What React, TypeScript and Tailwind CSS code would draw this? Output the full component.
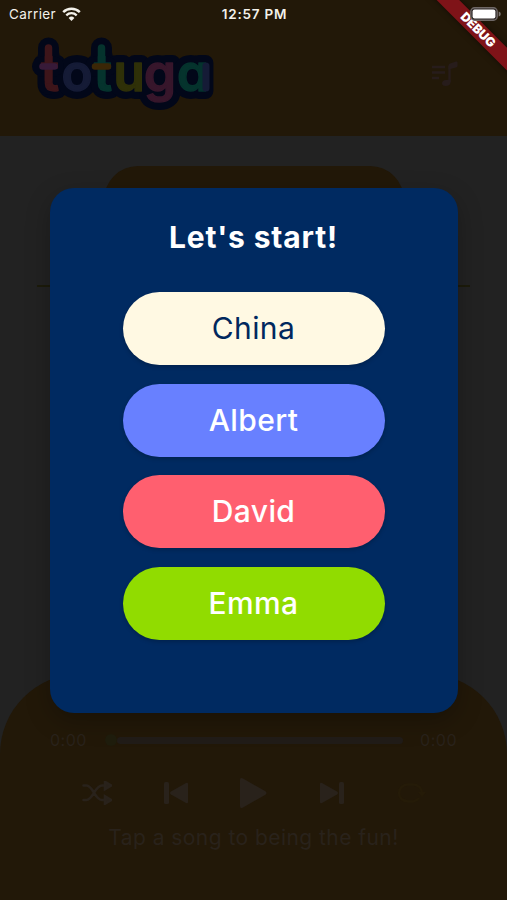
import React from 'react';

interface Player {
  name: string;
  className: string;
}

const players: Player[] = [
  { name: 'China', className: 'bg-[#fff9e3] text-[#00285e] font-normal' },
  { name: 'Albert', className: 'bg-[#6880ff] text-white font-medium' },
  { name: 'David', className: 'bg-[#ff5f6f] text-white font-medium' },
  { name: 'Emma', className: 'bg-[#91dc00] text-white font-medium' },
];

// each letter of the wordmark has its own colour and position
const letters = [
  { char: 't', x: 41, fill: '#3d151a' },
  { char: 'o', x: 61.5, fill: '#151b36' },
  { char: 't', x: 94, fill: '#05332d' },
  { char: 'u', x: 113.5, fill: '#2f3008' },
  { char: 'g', x: 144, fill: '#37162b' },
  { char: 'a', x: 177, fill: '#05332d' },
];

function StatusBar() {
  return (
    <div className="grid h-7 grid-cols-3 items-center pl-[9px] pr-[5px] text-[13.5px] text-[#f3f1ea]">
      <div className="flex items-center gap-[6px] tracking-[0.4px]">
        Carrier
        <svg width="19" height="14" viewBox="0 0 19 14" fill="none" stroke="currentColor">
          <path d="M1.2 5.1a12 12 0 0 1 16.6 0" strokeWidth="2.5" />
          <path d="M4.3 8.3a7.5 7.5 0 0 1 10.4 0" strokeWidth="2.3" />
          <path d="M9.5 14 6.6 11a4.2 4.2 0 0 1 5.8 0Z" fill="currentColor" stroke="none" />
        </svg>
      </div>
      <div className="whitespace-nowrap pr-[2px] text-center font-semibold tracking-[0.8px]">12:57 PM</div>
      <div className="relative z-20 flex justify-end">
        <svg width="32" height="14" viewBox="0 0 32 14">
          <rect x="0.8" y="0.8" width="26.4" height="12.4" rx="3.8" fill="#2b2525" stroke="#6f6866" strokeWidth="1.4" />
          <rect x="2.6" y="2.6" width="22.8" height="8.8" rx="2" fill="#fff" />
          <path d="M28.7 4.6c1.6.5 2 1.4 2 2.4s-.4 1.9-2 2.4Z" fill="#7d7775" />
        </svg>
      </div>
    </div>
  );
}

function Logo() {
  return (
    <svg
      width="190"
      height="80"
      viewBox="30 34 190 80"
      className="font-['Inter',sans-serif] text-[51px] font-semibold [font-feature-settings:'cv11','ss03']"
      strokeLinejoin="round"
      strokeLinecap="round"
    >
      {letters.map((l, i) => (
        <text key={i} x={l.x} y="91" fill="#020719" stroke="#020719" strokeWidth="16">
          {l.char}
        </text>
      ))}
      <path d="M48.5 48v36M101.500 48v36" stroke="#020719" strokeWidth="21" />
      <path d="M42 66.500h12M95 66.500h12" stroke="#020719" strokeWidth="20" />
      {letters.map((l, i) => (
        <text key={i} x={l.x} y="91" fill={l.fill} stroke={l.fill} strokeWidth="1.5">
          {l.char}
        </text>
      ))}
      {/* the two t stems reach above the other letters */}
      <path d="M48.500 48v32" stroke="#3d151a" strokeWidth="7.500" />
      <path d="M101.500 48v32" stroke="#05332d" strokeWidth="7.500" />
      <path d="M42.500 66.500h12" stroke="#371a38" strokeWidth="6.500" />
      <path d="M95 66.500h13" stroke="#3a2606" strokeWidth="6.500" />
      <path d="M206 66v22" stroke="#151b36" strokeWidth="7" />
    </svg>
  );
}

function PlayerBar() {
  return (
    <div className="flex h-[226px] flex-col items-center rounded-t-[80px] bg-[#221808] pt-[54px] text-[#29221b]">
      <div className="flex h-6 w-full items-center px-[50px] text-[16px] tracking-[0.5px]">
        <span className="w-[55px]">0:00</span>
        <span className="size-3 rounded-full bg-[#1f1d0d]" />
        <span className="h-[7px] w-[286px] rounded-full bg-[#211c18]" />
        <span className="flex-1 text-right">0:00</span>
      </div>
      <div className="mt-[25px] flex h-8 w-full items-center pl-[82px]">
        <svg width="30" height="24" viewBox="0 0 30 24" fill="none" stroke="currentColor" strokeWidth="2.6" strokeLinecap="round">
          <path d="M1.5 4.5h3C11 4.5 13 19 20 19h4M1.5 19h3C11 19 13 4.5 20 4.5h4" />
          <path d="M23 .8v7.4l6-3.7ZM23 15.3v7.4l6-3.7Z" fill="currentColor" />
        </svg>
        <svg className="ml-[52px]" width="24" height="22" viewBox="0 0 24 22" fill="currentColor">
          <rect width="5" height="22" rx="1.5" />
          <path d="M24 2v18q0 2-2 1L7 12.5q-2-1.5 0-3L22 1q2-1 2 1Z" />
        </svg>
        <svg className="ml-[52px]" width="27" height="30" viewBox="0 0 27 30" fill="currentColor">
          <path d="M0 2q0-3 3-1.4L25 13q3 2 0 4L3 29.400Q0 31 0 28Z" />
        </svg>
        <svg className="ml-[53px]" width="24" height="22" viewBox="0 0 24 22" fill="currentColor">
          <path d="M0 2v18q0 2 2 1l15-8.500q2-1.500 0-3L2 1Q0 0 0 2Z" />
          <rect x="19" width="5" height="22" rx="1.5" />
        </svg>
        <svg className="ml-[53px] text-[#251b08]" width="29" height="22" viewBox="0 0 29 22" fill="none" stroke="currentColor" strokeWidth="2.5">
          <path d="M2 11a9 8.500 0 0 1 9-8.500h5A9 8.500 0 0 1 25 11M22 16a9 8.500 0 0 1-6 3.500h-5A9 8.500 0 0 1 2 11" />
          <path d="M21 10h8l-4 5Z" fill="currentColor" stroke="none" />
        </svg>
      </div>
      <p className="mt-[13px] whitespace-nowrap text-[21px] leading-8 tracking-[0.45px]">Tap a song to being the fun!</p>
    </div>
  );
}

function StartDialog() {
  return (
    <div className="absolute inset-x-0 top-[188px] z-10 flex justify-center">
      <div
        role="dialog"
        className="flex h-[525px] w-[408px] flex-col items-center rounded-[24px] bg-[#002a61] shadow-[0_8px_24px_rgba(0,0,0,0.25)]"
      >
        <h1 className="mt-[29px] text-[30px] font-bold leading-10 tracking-[0.85px] text-white">Let's start!</h1>
        <div className="mt-[35px] flex flex-col gap-[18.6px]">
          {players.map((player) => (
            <button
              key={player.name}
              className={`h-[73px] w-[262px] rounded-full text-[30px] tracking-[0.4px] shadow-[0_2px_4px_rgba(0,0,0,0.2)] ${player.className}`}
            >
              {player.name}
            </button>
          ))}
        </div>
      </div>
    </div>
  );
}

export default function App() {
  return (
    <div className="relative flex h-[900px] w-full flex-col overflow-hidden bg-[#222222] font-['Inter',sans-serif]">
      <header className="h-[136px] bg-[#221808]">
        <StatusBar />
        <div className="flex items-start justify-between pl-[30px] pr-[49px] pt-[6px]">
          <Logo />
          <svg className="mt-[27px] text-[#271c1b]" width="26" height="26" viewBox="0 0 26 26" fill="none" stroke="currentColor" strokeWidth="2.4">
            <path d="M0 6h13M0 11.5h13M0 17h7" />
            <path d="M17.5 21V5" />
            <path d="M16.5 4.5q0-1.5 1.5-2L24 .5q1.500-.5 1.500 1V5q0 1-1.500 1.500l-7.500 2ZM18.700 20.500c0 3-2 4.500-5 4.500-2.400 0-3.700-1-3.700-2.700 0-2 1.600-3 4-3.300l4.700-.5Z" fill="currentColor" stroke="none" />
          </svg>
        </div>
      </header>
      <main className="flex flex-1 flex-col items-center pt-[30px]">
        <div className="h-[119px] w-[300px] rounded-t-[34px] bg-[#221808]" />
        <div className="h-[2px] w-[433px] bg-[#1c1b0a]" />
      </main>
      <PlayerBar />
      <StartDialog />
      {/* corner ribbon */}
      <div className="absolute left-[417.5px] top-[21.7px] z-10 h-[15.6px] w-[120px] rotate-45 bg-[#7f1318] text-center text-[12.5px] font-black leading-[15.6px] text-white shadow-[0_0_6px_rgba(0,0,0,0.5)]">
        DEBUG
      </div>
    </div>
  );
}
